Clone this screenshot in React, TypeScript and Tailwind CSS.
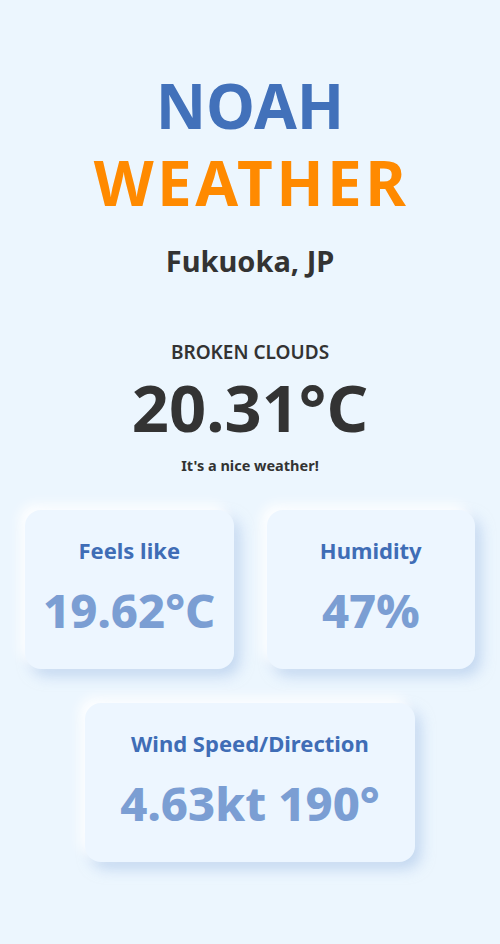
import React from "react";

const font = { fontFamily: '"Noto Sans", "Open Sans", sans-serif' };

function Card({ label, value, wide }: { label: string; value: string; wide?: boolean }) {
  return (
    <div
      className={`flex h-[159px] flex-col items-center rounded-[16px] bg-[#edf6ff] pt-[27px] shadow-[-6px_-6px_12px_rgba(255,255,255,0.9),6px_7px_14px_rgba(160,190,230,0.55)] ${wide ? "w-[330px]" : "w-full"}`}
    >
      <div className="text-[22px] font-bold leading-[26px] text-[#3f6db6]">{label}</div>
      <div className="mt-[19px] text-[47px] font-extrabold leading-[56px] text-[#7b9ed3]">{value}</div>
    </div>
  );
}

export default function App() {
  return (
    <div style={font} className="flex min-h-[944px] w-full flex-col items-center bg-[#ecf6fe]">
      <div className="mt-[67px] flex flex-col items-center text-[62px] font-bold leading-[77px]">
        <div className="text-[#4271ba]">NOAH</div>
        <div className="pl-[3px] tracking-[3.4px] text-[#ff8a00]">WEATHER</div>
      </div>
      <div className="mt-[22px] text-[29px] font-bold leading-[36px] text-[#333333]">Fukuoka, JP</div>
      <div className="mt-[63px] text-[19px] font-semibold leading-[20px] text-[#333333]">BROKEN CLOUDS</div>
      <div className="mt-[12px] text-[65px] font-bold leading-[66px] text-[#333333]">20.31°C</div>
      <div className="mt-[16px] text-[14.5px] font-bold leading-[18px] text-[#333333]">It's a nice weather!</div>
      <div className="mt-[36px] grid w-full grid-cols-2 gap-[33px] px-[25px]">
        <Card label="Feels like" value="19.62°C" />
        <Card label="Humidity" value="47%" />
      </div>
      <div className="mt-[34px]">
        <Card label="Wind Speed/Direction" value="4.63kt 190°" wide />
      </div>
    </div>
  );
}
